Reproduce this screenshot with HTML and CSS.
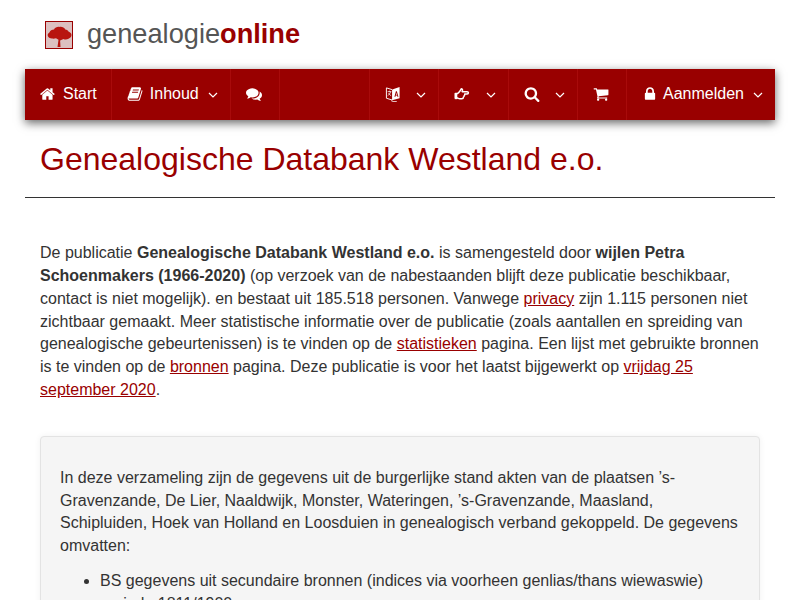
FILE: index.html
```html
<!DOCTYPE html>
<html lang="nl">
<head>
    <meta charset="UTF-8">
    <meta name="viewport" content="width=device-width, initial-scale=1.0">
    <title>Genealogische Databank Westland e.o.</title>
    <link rel="stylesheet" href="styles.css">
</head>
<body>
    <div class="container">
        <!-- Logo -->
        <div class="brand">
            <svg class="brand-icon" viewBox="0 0 28 28">
                <rect x=".5" y=".5" width="27" height="27" fill="#dcc0c0" stroke="#990000"/>
                <path d="M12.500 26h3l-.4-6.500 3.400-1.500c1.500.8 3.500.6 5-.2 1.800-.8 3-2.200 3-3.800s-1.300-2.800-2.800-3.200c-.3-1.500-2-2.400-3.400-2.400-1-1.800-3.400-3-5.800-2.500-2.300-.3-4.600.8-5.500 2.500-2 0-4 1-4.600 3-1.200.8-1.900 1.800-1.700 3 .3 1.700 2.200 3 4.300 3.200 1.500.3 3 0 4 -.4l2.500 1.500z" fill="#b8150f"/>
            </svg>
            <span class="brand-name">genealogie<b>online</b></span>
        </div>

        <!-- Navigation -->
        <nav class="navbar">
            <ul class="nav-left">
                <li class="nav-item">
                    <svg class="icon" viewBox="0 0 1792 1792"><path d="M1408 992v480q0 26-19 45t-45 19h-384v-384h-256v384h-384q-26 0-45-19t-19-45v-480q0-1 .5-3t.5-3l575-474 575 474q1 2 1 6zm223-69l-62 74q-8 9-21 11h-3q-13 0-21-7l-692-577-692 577q-12 8-24 7-13-2-21-11l-62-74q-8-10-7-23.500t11-21.500l719-599q32-26 76-26t76 26l244 204v-195q0-14 9-23t23-9h192q14 0 23 9t9 23v408l219 182q10 8 11 21.500t-7 23.500z"/></svg>
                    <span>Start</span>
                </li>
                <li class="nav-item">
                    <svg class="icon" viewBox="0 0 1792 1792"><path d="M1703 478q40 57 18 129l-275 906q-19 64-76.500 107.500t-122.500 43.500h-923q-77 0-148.500-53.500t-99.500-131.500q-24-67-2-127 0-4 3-27t4-37q1-8-3-21.500t-3-19.500q2-11 8-21t16.500-23.500 16.500-23.500q23-38 45-91.500t30-91.500q3-10 .5-30t-.5-28q3-11 17-28t17-23q21-36 42-92t25-90q1-9-2.500-32t.5-28q4-13 22-30.500t22-22.500q19-26 42.500-84.500t27.500-96.500q1-8-3-25.500t-2-26.500q2-8 9-18t18-23 17-21q8-12 16.500-30.500t15-35 16-36 19.500-32 26.500-23.500 36-11.500 47.500 5.500l-1 3q38-9 51-9h761q74 0 114 56t18 130l-274 906q-36 119-71.500 153.500t-128.500 34.500h-869q-27 0-38 15-11 16-1 43 24 70 144 70h923q29 0 56-15.500t35-41.500l300-987q7-22 5-57 38 15 59 43zm-1064 2q-4 13 2 22.500t20 9.500h608q13 0 25.500-9.500t16.500-22.500l21-64q4-13-2-22.500t-20-9.500h-608q-13 0-25.500 9.500t-16.500 22.500zm-83 256q-4 13 2 22.500t20 9.500h608q13 0 25.500-9.500t16.500-22.500l21-64q4-13-2-22.500t-20-9.500h-608q-13 0-25.500 9.500t-16.500 22.500z"/></svg>
                    <span>Inhoud</span>
                    <svg class="caret" viewBox="0 0 10 6"><path d="M1 1l4 4 4-4"/></svg>
                </li>
                <li class="nav-item">
                    <svg class="icon" viewBox="0 0 1792 1792"><path d="M1408 768q0 139-94 257t-256.500 186.500-353.500 68.500q-86 0-176-16-124 88-278 128-36 9-86 16h-3q-11 0-20.500-8t-11.500-21q-1-3-1-6.500t.5-6.500 2-6l2.500-5 3.500-5.500 4-5 4.500-5 4-4.500q5-6 23-25t26-29.500 22.500-29 25-38.500 20.500-44q-124-72-195-177t-71-224q0-139 94-257t256.500-186.500 353.500-68.500 353.500 68.500 256.500 186.500 94 257zm384 256q0 120-71 224.500t-195 176.500q10 24 20.500 44t25 38.500 22.500 29 26 29.500 23 25q1 1 4 4.500t4.500 5 4 5 3.500 5.500l2.500 5 2 6 .5 6.500-1 6.500q-3 14-13 22t-22 7q-50-7-86-16-154-40-278-128-90 16-176 16-271 0-472-132 58 4 88 4 161 0 309-45t264-129q125-92 192-212t67-254q0-77-23-152 129 71 204 178t75 230z"/></svg>
                </li>
            </ul>
            <ul class="nav-right">
                <li class="nav-item">
                    <svg class="icon" viewBox="0 0 17 17"><path d="M1.500 2l6.500 2v11l-6.500-2z" fill="none" stroke="#fff"/><path d="M8.500 3.500l7-2.500v12l-7 2z"/><path d="M2.800 6h4M4.700 5v1M5.900 6c-.4 2-1.600 3.500-3.100 4.300M3.800 7.500c.5 1.200 1.400 2.200 2.700 2.800" fill="none" stroke="#fff" stroke-width=".8"/><path d="M10 11.500l1.600-6h1l1.700 6h-1.100l-.3-1.300h-1.500l-.3 1.300zm1.700-2.200h1.100l-.55-2.100z" fill="#990000"/><path d="M6.500 15.500l1.500 1h4.500" fill="none" stroke="#fff" stroke-width=".8"/></svg>
                    <svg class="caret" viewBox="0 0 10 6"><path d="M1 1l4 4 4-4"/></svg>
                </li>
                <li class="nav-item">
                    <svg class="icon" viewBox="0 0 17 15"><path d="M1.500 7h2.300c1-.4 1.900-1.700 2.600-2.700.6-.8 1-1.600 1.300-2.300.9 0 1.500.7 1.300 1.700l-.4 1.300h5.300c.8 0 1.400.6 1.400 1.200s-.6 1.300-1.400 1.300h-2.500c.2.900-.1 1.500-.6 1.800.1.800-.2 1.300-.8 1.600 0 1-.7 1.600-1.700 1.600H6c-.9 0-1.500-.5-2.200-.7H1.500z" fill="none" stroke="#fff" stroke-width="1.600" stroke-linejoin="round"/><rect x=".8" y="6.500" width="2.700" height="6.500"/></svg>
                    <svg class="caret" viewBox="0 0 10 6"><path d="M1 1l4 4 4-4"/></svg>
                </li>
                <li class="nav-item">
                    <svg class="icon" viewBox="0 0 1792 1792"><path d="M1216 832q0-185-131.500-316.500t-316.500-131.500-316.500 131.500-131.500 316.500 131.500 316.500 316.500 131.500 316.500-131.500 131.500-316.500zm512 832q0 52-38 90t-90 38q-54 0-90-38l-343-342q-179 124-399 124-143 0-273.500-55.500t-225-150-150-225-55.500-273.500 55.500-273.500 150-225 225-150 273.500-55.500 273.500 55.500 225 150 150 225 55.500 273.500q0 220-124 399l343 343q37 37 37 90z"/></svg>
                    <svg class="caret" viewBox="0 0 10 6"><path d="M1 1l4 4 4-4"/></svg>
                </li>
                <li class="nav-item">
                    <svg class="icon" viewBox="0 0 1792 1792"><path d="M704 1536q0 52-38 90t-90 38-90-38-38-90 38-90 90-38 90 38 38 90zm896 0q0 52-38 90t-90 38-90-38-38-90 38-90 90-38 90 38 38 90zm128-1088v512q0 24-16.500 42.500t-40.500 21.500l-1044 122q13 60 13 70 0 16-24 64h920q26 0 45 19t19 45-19 45-45 19h-1024q-26 0-45-19t-19-45q0-11 8-31.500t16-36 21.500-40 15.500-29.500l-177-823h-204q-26 0-45-19t-19-45 19-45 45-19h256q16 0 28.500 6.500t19.500 15.500 13 24.500 8 26 5.500 29.500 4.500 26h1201q26 0 45 19t19 45z"/></svg>
                </li>
                <li class="nav-item">
                    <svg class="icon icon-lock" viewBox="0 0 1792 1792"><path d="M640 768h512v-192q0-106-75-181t-181-75-181 75-75 181v192zm832 96v576q0 40-28 68t-68 28h-960q-40 0-68-28t-28-68v-576q0-40 28-68t68-28h32v-192q0-184 132-316t316-132 316 132 132 316v192h32q40 0 68 28t28 68z"/></svg>
                    <span>Aanmelden</span>
                    <svg class="caret" viewBox="0 0 10 6"><path d="M1 1l4 4 4-4"/></svg>
                </li>
            </ul>
        </nav>

        <h1 class="page-title">Genealogische Databank Westland e.o.</h1>

        <!-- Main content -->
        <div class="content">
            <p class="intro">De publicatie <b>Genealogische Databank Westland e.o.</b> is samengesteld door <b>wijlen Petra Schoenmakers (1966-2020)</b> (op verzoek van de nabestaanden blijft deze publicatie beschikbaar, contact is niet mogelijk). en bestaat uit 185.518 personen. Vanwege <a href="#">privacy</a> zijn 1.115 personen niet zichtbaar gemaakt. Meer statistische informatie over de publicatie (zoals aantallen en spreiding van genealogische gebeurtenissen) is te vinden op de <a href="#">statistieken</a> pagina. Een lijst met gebruikte bronnen is te vinden op de <a href="#">bronnen</a> pagina. Deze publicatie is voor het laatst bijgewerkt op <a href="#">vrijdag 25 september 2020</a>.</p>

            <div class="well">
                <p>In deze verzameling zijn de gegevens uit de burgerlijke stand akten van de plaatsen ’s-Gravenzande, De Lier, Naaldwijk, Monster, Wateringen, ’s-Gravenzande, Maasland, Schipluiden, Hoek van Holland en Loosduien in genealogisch verband gekoppeld. De gegevens omvatten:</p>
                <ul>
                    <li>BS gegevens uit secundaire bronnen (indices via voorheen genlias/thans wiewaswie) periode 1811/1900</li>
                </ul>
            </div>
        </div>
    </div>
</body>
</html>
```

FILE: styles.css
```css
body {
    font-family: "Liberation Sans", Arial, sans-serif;
    font-size: 16px;
    line-height: 1.42857;
    color: #333;
    background-color: #fff;
    margin: 0;
}

.container {
    padding: 0 25px;
}

.brand {
    display: flex;
    align-items: center;
    gap: 14px;
    height: 69px;
    padding-left: 20px;
}

.brand-icon {
    width: 28px;
    height: 28px;
}

.brand-name {
    font-size: 27.2px;
    color: #555;
    line-height: 30px;
    padding-bottom: 2px;
}

.brand-name b {
    color: #990000;
}

.navbar {
    display: flex;
    justify-content: space-between;
    height: 51px;
    background-color: #990000;
    box-shadow: 0 3px 9px rgba(0, 0, 0, 0.6);
    color: #fff;
}

.navbar ul {
    display: flex;
    list-style-type: none;
    margin: 0;
    padding: 0;
}

.nav-item {
    display: flex;
    align-items: center;
    padding: 0 14px 0 15px;
    border-right: 1px solid #a80b0b;
}

.nav-right {
    border-left: 1px solid #a80b0b;
}

.nav-right .nav-item:last-child {
    border-right: none;
}

.icon {
    flex: none;
    width: 16px;
    height: 16px;
    fill: #fff;
    margin: 0 7px 2px 0;
}

.nav-item > .icon:last-child {
    margin-right: 3px;
}

.nav-item > .icon-lock {
    margin-right: 5px;
}

.caret {
    flex: none;
    width: 10px;
    height: 6px;
    margin: 0 -2px 0 9px;
    fill: none;
    stroke: #fff;
    stroke-width: 1.2;
}

.icon + .caret {
    margin-left: 8.330px;
}

.page-title {
    font-size: 32px;
    font-weight: 400;
    line-height: 36px;
    color: #990000;
    margin: 0;
    padding: 21px 15px 20px;
    border-bottom: 1px solid #333;
}

.content {
    padding: 44px 15px 0;
}

.intro {
    margin: 0 0 34.4px;
}

.intro a {
    color: #990000;
    text-decoration: underline;
}

.well {
    background-color: #f5f5f5;
    border: 1px solid #e3e3e3;
    border-radius: 4px;
    box-shadow: 0 0 6px rgba(0, 0, 0, 0.06);
    padding: 29.420px 19px 19px;
}

.well p {
    margin: 0 0 12px;
}

.well ul {
    margin: 0;
    padding-left: 40px;
}
```
